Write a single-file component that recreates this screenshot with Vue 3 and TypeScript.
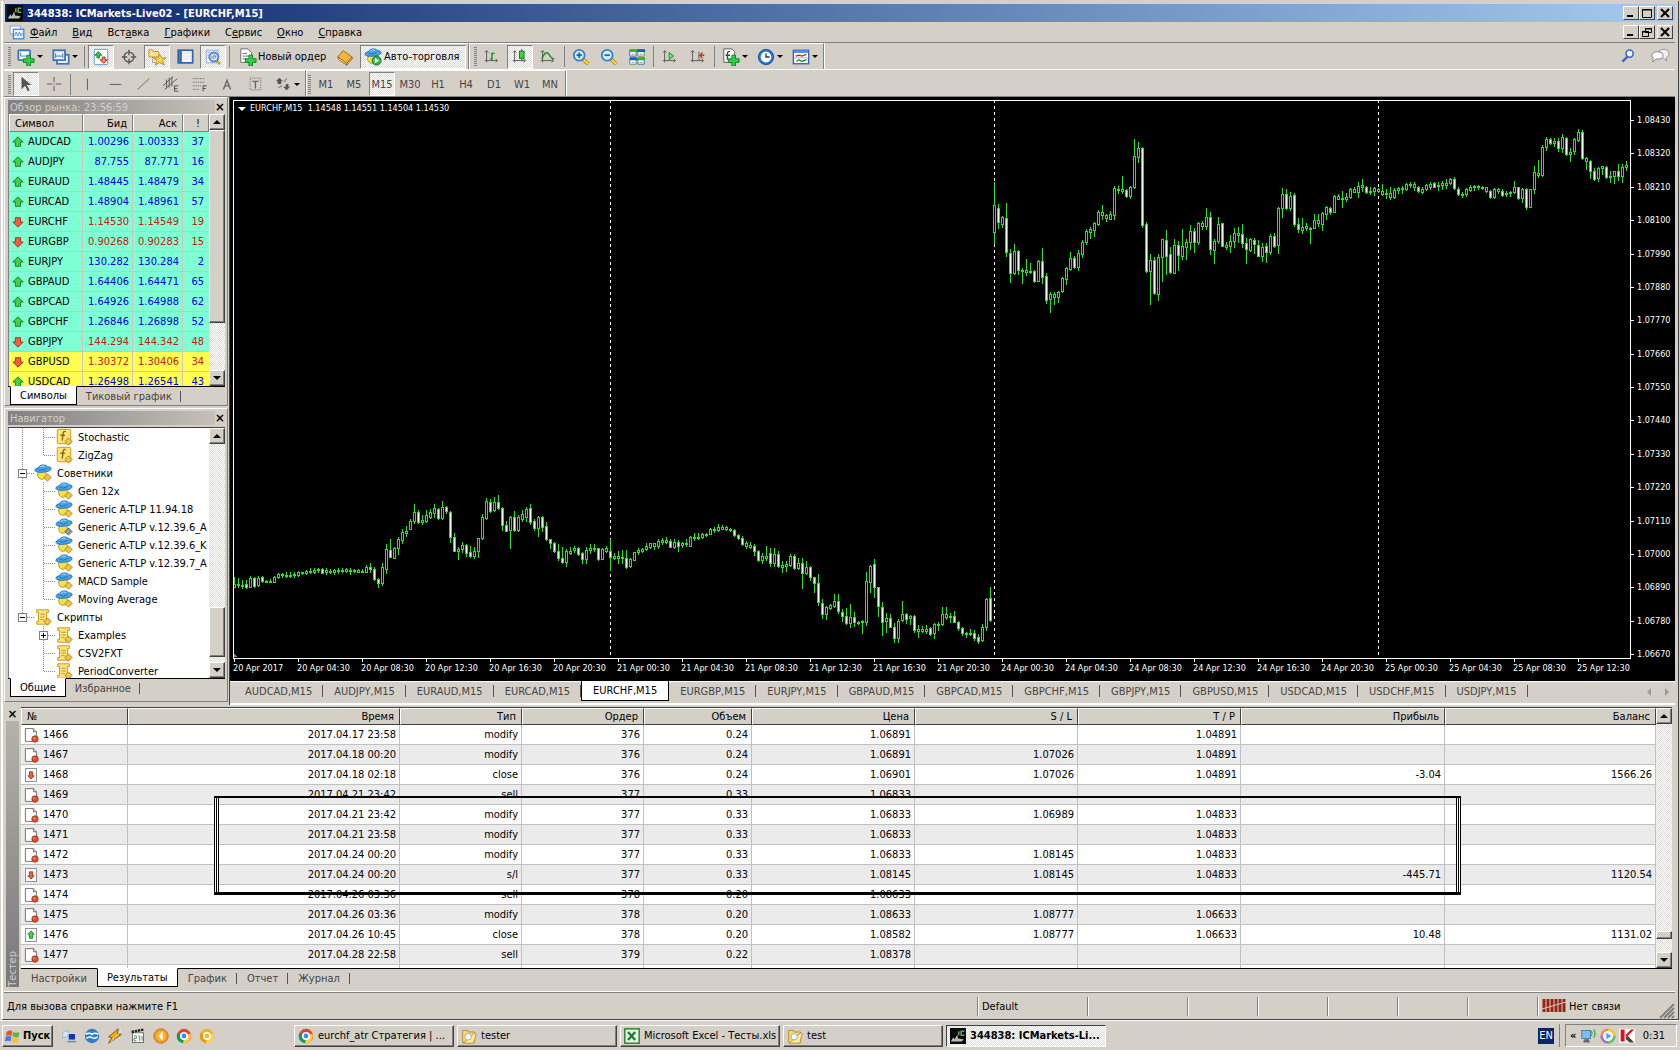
<script setup lang="ts">
interface Quote { symbol: string; bid: string; ask: string; spread: number; dir: 'up' | 'down'; hot?: boolean }
interface TreeNode { level: 1 | 2; icon: string; label: string; box?: '+' | '-'; trunk: 'full' | 'half' | 'none'; last?: boolean }
interface Candle { x: number; high: number; top: number; bottom: number; low: number; bear: boolean }
interface Tool { icon: string; label: string; on?: boolean; drop?: boolean; text?: string; sep?: boolean }

const menu = [
  ['', 'Ф', 'айл'], ['', 'В', 'ид'], ['Вст', 'а', 'вка'], ['', 'Г', 'рафики'],
  ['С', 'е', 'рвис'], ['', 'О', 'кно'], ['', 'С', 'правка'],
]

const sep: Tool = { icon: '', label: '', sep: true }
const standardTools: Tool[] = [
  { icon: 'newChart', label: 'Новый график', drop: true },
  { icon: 'profiles', label: 'Профили', drop: true },
  sep,
  { icon: 'market', label: 'Обзор рынка', on: true },
  { icon: 'target', label: 'Окно данных' },
  { icon: 'star', label: 'Навигатор', on: true },
  { icon: 'terminal', label: 'Терминал' },
  { icon: 'tester', label: 'Тестер стратегий', on: true },
  sep,
  { icon: 'order', label: 'Новый ордер', text: 'Новый ордер' },
  { icon: 'book', label: 'MetaEditor' },
  { icon: 'auto', label: 'Авто-торговля', text: 'Авто-торговля', on: true },
]
const chartTools: Tool[] = [
  { icon: 'bars', label: 'Бары' },
  { icon: 'candles', label: 'Японские свечи', on: true },
  { icon: 'line', label: 'Линия' },
  sep,
  { icon: 'zoomIn', label: 'Увеличить' },
  { icon: 'zoomOut', label: 'Уменьшить' },
  { icon: 'tile', label: 'Окна мозаикой' },
  sep,
  { icon: 'scroll', label: 'Автопрокрутка' },
  { icon: 'shift', label: 'Сдвиг графика' },
  sep,
  { icon: 'indicators', label: 'Индикаторы', drop: true },
  { icon: 'clock', label: 'Периоды', drop: true },
  { icon: 'template', label: 'Шаблоны', drop: true },
]
const drawTools: Tool[] = [
  { icon: 'pointer', label: 'Курсор', on: true },
  { icon: 'cross', label: 'Перекрестие' },
  sep,
  { icon: 'vline', label: 'Вертикальная линия' },
  { icon: 'hline', label: 'Горизонтальная линия' },
  { icon: 'trend', label: 'Трендовая линия' },
  { icon: 'channel', label: 'Канал' },
  { icon: 'fibo', label: 'Фибоначчи' },
  { icon: 'textA', label: 'Текст' },
  { icon: 'textT', label: 'Метка' },
  { icon: 'arrows', label: 'Стрелки', drop: true },
]
const periods = ['M1', 'M5', 'M15', 'M30', 'H1', 'H4', 'D1', 'W1', 'MN']

const quotes: Quote[] = [
  { symbol: 'AUDCAD', bid: '1.00296', ask: '1.00333', spread: 37, dir: 'up' },
  { symbol: 'AUDJPY', bid: '87.755', ask: '87.771', spread: 16, dir: 'up' },
  { symbol: 'EURAUD', bid: '1.48445', ask: '1.48479', spread: 34, dir: 'up' },
  { symbol: 'EURCAD', bid: '1.48904', ask: '1.48961', spread: 57, dir: 'up' },
  { symbol: 'EURCHF', bid: '1.14530', ask: '1.14549', spread: 19, dir: 'down' },
  { symbol: 'EURGBP', bid: '0.90268', ask: '0.90283', spread: 15, dir: 'down' },
  { symbol: 'EURJPY', bid: '130.282', ask: '130.284', spread: 2, dir: 'up' },
  { symbol: 'GBPAUD', bid: '1.64406', ask: '1.64471', spread: 65, dir: 'up' },
  { symbol: 'GBPCAD', bid: '1.64926', ask: '1.64988', spread: 62, dir: 'up' },
  { symbol: 'GBPCHF', bid: '1.26846', ask: '1.26898', spread: 52, dir: 'up' },
  { symbol: 'GBPJPY', bid: '144.294', ask: '144.342', spread: 48, dir: 'down' },
  { symbol: 'GBPUSD', bid: '1.30372', ask: '1.30406', spread: 34, dir: 'down', hot: true },
  { symbol: 'USDCAD', bid: '1.26498', ask: '1.26541', spread: 43, dir: 'up', hot: true },
]

const tree: TreeNode[] = [
  { level: 2, icon: 'func', label: 'Stochastic', trunk: 'full' },
  { level: 2, icon: 'func', label: 'ZigZag', trunk: 'full', last: true },
  { level: 1, icon: 'expert', label: 'Советники', box: '-', trunk: 'full' },
  { level: 2, icon: 'expert', label: 'Gen 12x', trunk: 'full' },
  { level: 2, icon: 'expert', label: 'Generic A-TLP 11.94.18', trunk: 'full' },
  { level: 2, icon: 'expertOff', label: 'Generic A-TLP v.12.39.6_A', trunk: 'full' },
  { level: 2, icon: 'expert', label: 'Generic A-TLP v.12.39.6_K', trunk: 'full' },
  { level: 2, icon: 'expert', label: 'Generic A-TLP v.12.39.7_A', trunk: 'full' },
  { level: 2, icon: 'expert', label: 'MACD Sample', trunk: 'full' },
  { level: 2, icon: 'expert', label: 'Moving Average', trunk: 'full', last: true },
  { level: 1, icon: 'script', label: 'Скрипты', box: '-', trunk: 'half' },
  { level: 2, icon: 'script', label: 'Examples', box: '+', trunk: 'none' },
  { level: 2, icon: 'script', label: 'CSV2FXT', trunk: 'none' },
  { level: 2, icon: 'script', label: 'PeriodConverter', trunk: 'none', last: true },
]

const prices = [
  '1.08430', '1.08320', '1.08210', '1.08100', '1.07990', '1.07880', '1.07770', '1.07660', '1.07550',
  '1.07440', '1.07330', '1.07220', '1.07110', '1.07000', '1.06890', '1.06780', '1.06670',
]
const times = [
  '20 Apr 2017', '20 Apr 04:30', '20 Apr 08:30', '20 Apr 12:30', '20 Apr 16:30', '20 Apr 20:30',
  '21 Apr 00:30', '21 Apr 04:30', '21 Apr 08:30', '21 Apr 12:30', '21 Apr 16:30', '21 Apr 20:30',
  '24 Apr 00:30', '24 Apr 04:30', '24 Apr 08:30', '24 Apr 12:30', '24 Apr 16:30', '24 Apr 20:30',
  '25 Apr 00:30', '25 Apr 04:30', '25 Apr 08:30', '25 Apr 12:30',
]
const daySeparators = [376, 760, 1144]

// One bar per item: high, body top, body bottom, low. A leading minus marks a falling bar.
const bars = `
477,484,487,487 -478,484,485,487 480,485,486,488 -480,484,487,488 476,478,487,487 -477,478,486,487
476,478,485,486 -476,477,481,482 480,481,482,482 479,481,482,482 476,477,482,482 473,474,477,478
473,474,475,477 -472,475,476,477 472,475,476,477 472,474,475,477 471,472,475,476 472,472,473,474
470,471,473,474 468,471,472,473 468,470,472,473 468,469,470,472 -468,469,473,473 468,470,472,474
469,471,472,473 469,470,472,474 468,470,471,473 468,470,471,472 468,469,471,472 468,470,471,474
469,470,471,472 469,470,472,472 469,471,472,472 465,467,472,472 -463,467,469,472 -467,469,479,480
-478,479,483,487 463,467,483,485 444,449,469,473 -439,450,457,457 447,448,458,458 437,439,448,454
429,432,440,443 426,431,433,436 419,421,429,429 404,412,421,423 -410,412,422,423 415,420,422,424
410,415,421,422 409,412,417,418 404,408,413,417 -408,409,418,419 401,407,418,419 -406,407,411,413
-411,412,437,442 -433,437,451,451 447,449,451,459 442,445,449,452 -444,445,453,456 -446,452,456,457
447,451,456,458 438,438,451,457 414,417,438,439 398,401,418,419 -399,402,411,412 397,402,410,411
-395,402,408,409 -407,408,425,430 -421,425,431,431 416,417,430,448 -411,417,430,431 415,417,430,431
410,414,419,421 407,409,417,421 -404,408,422,424 -419,421,428,430 416,417,428,436 -416,417,427,431
-422,426,439,440 -439,439,443,448 -442,443,451,452 -444,451,458,460 -447,458,462,463 449,451,462,466
447,451,453,454 446,448,450,452 -447,448,454,455 -452,453,459,463 447,450,459,463 444,448,450,453
444,448,449,451 -448,448,459,460 448,449,459,459 446,448,451,452 -439,451,457,470 453,456,458,459
451,456,458,463 450,457,458,463 -450,458,467,468 458,459,466,467 452,452,460,460 448,450,452,454
448,449,451,452 443,446,449,450 443,443,447,448 443,443,446,449 439,441,446,448 438,440,442,444
437,440,442,443 -439,441,447,447 439,442,447,448 -440,442,446,451 442,443,445,447 439,443,444,446
436,437,446,446 433,437,438,440 433,437,438,439 433,434,437,438 433,434,435,436 428,429,434,434
427,429,430,432 424,427,430,431 425,427,429,429 426,427,429,430 428,429,430,431 -429,430,435,436
-434,435,438,439 -436,438,444,445 441,443,446,448 442,445,447,448 -444,446,451,455 -450,451,460,461
453,456,460,463 446,456,458,460 -448,453,463,466 448,454,463,466 -451,454,466,467 461,465,467,472
461,464,466,471 454,456,465,466 -454,456,468,469 458,463,468,469 -458,463,473,488 461,467,473,474
-466,467,477,480 -477,477,483,492 -474,483,502,505 -499,503,514,518 506,507,514,519 504,505,508,509
494,501,506,507 -494,501,511,513 -509,512,516,521 -508,516,523,524 504,517,523,527 -512,517,522,526
521,522,523,524 520,521,522,533 472,481,522,525 465,466,482,492 -459,464,487,497 -487,487,506,516
-502,507,522,535 513,518,521,532 -514,518,527,527 -523,527,538,542 519,521,538,542 501,514,520,521
-513,514,519,523 515,516,518,524 -515,516,530,532 525,529,531,537 526,529,531,532 525,529,531,533
-527,528,534,535 523,524,533,538 522,524,525,530 507,514,524,525 507,514,517,519 513,516,517,522
-511,516,522,522 -521,522,528,530 -527,528,533,535 532,533,534,537 529,533,534,535 -530,533,538,540
-534,537,541,543 524,527,540,541 498,499,527,530 -487,498,520,521 82,105,132,143 -104,108,122,128
116,117,124,127 -103,118,152,156 -149,153,173,182 144,151,173,174 -150,151,170,174 168,170,171,183
159,170,172,175 163,171,172,173 -170,171,181,182 160,161,181,181 -148,161,177,183 -173,176,200,203
192,194,199,212 192,194,197,204 191,192,197,202 177,178,191,192 167,168,179,184 152,158,169,170
-156,158,167,168 150,153,167,170 140,142,154,157 129,131,142,144 127,129,132,138 122,123,130,136
110,112,124,125 105,112,115,119 114,115,118,121 111,114,119,119 86,88,115,119 86,89,90,93
76,89,91,93 -89,90,96,97 86,87,96,98 39,56,87,88 42,48,57,62 -47,48,125,127
-122,124,171,172 154,160,171,204 -157,160,193,194 154,157,194,200 139,139,157,181 -130,140,156,174
-147,154,172,173 139,145,173,173 -141,145,155,170 129,146,156,159 139,142,147,159 125,131,142,149
-128,131,142,152 122,123,142,144 121,123,126,129 108,117,126,129 -112,117,149,154 139,141,150,163
117,124,141,143 -123,123,146,146 142,145,147,149 135,141,146,152 128,133,141,147 127,133,135,142
-124,134,143,147 -138,143,149,163 138,139,150,151 -138,140,144,153 -140,145,156,156 143,147,156,161
-143,146,152,162 134,136,152,154 -133,136,146,147 107,108,145,153 88,94,108,117 -89,94,108,109
92,96,108,110 -93,95,124,126 -118,124,129,132 118,127,130,133 123,126,128,130 127,128,129,143
114,120,128,128 114,120,123,126 112,113,124,130 106,107,114,119 -107,108,112,114 95,96,112,112
94,96,99,99 91,98,99,107 93,97,99,101 88,89,97,98 87,89,92,92 82,86,92,97
79,85,87,91 -86,87,92,93 87,91,92,94 87,88,91,95 88,89,91,92 84,91,94,95
89,93,94,98 87,93,97,99 88,90,97,98 87,88,90,93 86,88,89,93 83,84,89,90
82,84,85,87 82,84,87,90 -86,87,91,92 87,89,92,93 84,85,89,90 82,84,87,89
-82,83,87,87 82,85,86,90 81,83,85,89 79,83,85,88 78,79,83,84 -77,79,88,89
-87,89,94,95 92,94,95,97 88,89,94,96 85,87,90,91 85,86,87,90 85,86,87,89
86,87,88,89 87,87,91,92 -90,91,97,98 88,89,97,98 88,89,91,93 -89,91,95,96
91,93,94,96 91,92,93,96 81,87,92,93 -87,87,98,99 88,89,98,102 -88,89,107,109
89,89,107,107 66,72,89,93 60,73,75,77 45,47,75,76 37,39,47,50 -38,39,43,44
38,41,43,46 -38,41,48,51 34,37,48,52 -37,38,54,55 48,52,54,61 38,39,51,54
29,32,40,41 -30,32,58,59 57,58,61,69 -60,61,71,78 -68,71,79,80 67,68,78,81
66,66,68,74 -66,67,77,78 71,76,77,82 71,71,76,83 -64,71,76,80 64,67,76,82
61,65,67,70`
const candles: Candle[] = bars.trim().split(/\s+/).map((bar, i) => {
  const [high, top, bottom, low] = bar.replace('-', '').split(',').map(Number)
  return { x: i * 4, high, top, bottom, low, bear: bar.startsWith('-') }
})

const chartTabs = [
  'AUDCAD', 'AUDJPY', 'EURAUD', 'EURCAD', 'EURCHF', 'EURGBP', 'EURJPY', 'GBPAUD',
  'GBPCAD', 'GBPCHF', 'GBPJPY', 'GBPUSD', 'USDCAD', 'USDCHF', 'USDJPY',
]

const columns = [
  { title: '№', width: 107 }, { title: 'Время', width: 272 }, { title: 'Тип', width: 122 },
  { title: 'Ордер', width: 122 }, { title: 'Объем', width: 108 }, { title: 'Цена', width: 163 },
  { title: 'S / L', width: 163 }, { title: 'T / P', width: 163 }, { title: 'Прибыль', width: 204 },
  { title: 'Баланс', width: 0 },
]
const results: string[][] = [
  ['1466', '2017.04.17 23:58', 'modify', '376', '0.24', '1.06891', '', '1.04891', '', ''],
  ['1467', '2017.04.18 00:20', 'modify', '376', '0.24', '1.06891', '1.07026', '1.04891', '', ''],
  ['1468', '2017.04.18 02:18', 'close', '376', '0.24', '1.06901', '1.07026', '1.04891', '-3.04', '1566.26'],
  ['1469', '2017.04.21 23:42', 'sell', '377', '0.33', '1.06833', '', '', '', ''],
  ['1470', '2017.04.21 23:42', 'modify', '377', '0.33', '1.06833', '1.06989', '1.04833', '', ''],
  ['1471', '2017.04.21 23:58', 'modify', '377', '0.33', '1.06833', '', '1.04833', '', ''],
  ['1472', '2017.04.24 00:20', 'modify', '377', '0.33', '1.06833', '1.08145', '1.04833', '', ''],
  ['1473', '2017.04.24 00:20', 's/l', '377', '0.33', '1.08145', '1.08145', '1.04833', '-445.71', '1120.54'],
  ['1474', '2017.04.26 03:36', 'sell', '378', '0.20', '1.08633', '', '', '', ''],
  ['1475', '2017.04.26 03:36', 'modify', '378', '0.20', '1.08633', '1.08777', '1.06633', '', ''],
  ['1476', '2017.04.26 10:45', 'close', '378', '0.20', '1.08582', '1.08777', '1.06633', '10.48', '1131.02'],
  ['1477', '2017.04.28 22:58', 'sell', '379', '0.22', '1.08378', '', '', '', ''],
  ['', '', '', '', '', '', '', '', '', ''],
]
const rowIcon = (row: string[]): string => (row[9] === '' ? 'pageDot' : row[8].startsWith('-') ? 'pageDown' : 'pageUp')
const testerTabs = ['Настройки', 'Результаты', 'График', 'Отчет', 'Журнал']

const quickLaunch = ['desktop', 'bird', 'winamp', 'mpc', 'aimp', 'chrome', 'canary']
const tasks = [
  { icon: 'chrome', title: 'eurchf_atr Стратегия | ...' },
  { icon: 'folder', title: 'tester' },
  { icon: 'excel', title: 'Microsoft Excel - Тесты.xls' },
  { icon: 'folder', title: 'test' },
  { icon: 'mt', title: '344838: ICMarkets-Li...', on: true },
]

const axes = '<path d="M4 3v13M2 14h14M2 5l2-2 2 2M14 12l2 2-2 2" fill="none" stroke="#555"/>'
const plus = '<path d="M11 8h4v4h4v4h-4v4h-4v-4H7v-4h4z" fill="#2fd043" stroke="#0a7d1c"/>'
const gem = (fill: string, line: string) => `<path d="M15 11l4 4-4 4-4-4z" fill="${fill}" stroke="${line}"/>`
const hat = '<ellipse cx="9" cy="12" rx="5" ry="5" fill="#f4e04a" stroke="#a99416"/><path d="M1 7q0-2 4-3 1-3 5-3t5 2q4 0 4 2 0 3-8 4-9 1-10-2z" fill="#48a5e8" stroke="#1a6bae"/><path d="M5 6q4 2 9-1" fill="none" stroke="#1a6bae"/><path d="M7 3q3-2 5 0" fill="none" stroke="#b6e0ff"/>'
const page = '<path d="M3 2h10l4 4v12H3z" fill="#fff" stroke="#555"/><path d="M13 2v4h4" fill="#ddd" stroke="#555"/>'
const lens = '<path d="M12 12l6 6" stroke="#b98500" stroke-width="4"/><path d="M12 12l6 6" stroke="#ffdc5a" stroke-width="2"/><circle cx="8" cy="8" r="6" fill="#d6efff" stroke="#3c83c4" stroke-width="2"/>'
const wheel = (a: string, b: string, c: string, d: string) =>
  `<circle cx="10" cy="10" r="9" fill="${a}"/><path d="M10 10L2 6a9 9 0 0 0 7 13z" fill="${b}"/><path d="M10 10l8-3a9 9 0 0 1-9 12z" fill="${c}"/><circle cx="10" cy="10" r="4" fill="${d}" stroke="#fff" stroke-width="2"/>`
const arrowUp = '<path d="M10 4l6 6h-3v5H7v-5H4z" fill="#46cf46" stroke="#12721c"/>'
const arrowDown = '<path d="M10 16l6-6h-3V5H7v5H4z" fill="#f2603a" stroke="#a32411"/>'

const icons: Record<string, string> = {
  newChart: `<rect x="1.5" y="2.5" width="13" height="11" rx="1" fill="#fff" stroke="#3a74bd" stroke-width="2"/><path d="M4 9V5M4 9h8" stroke="#3a74bd"/>${plus}`,
  profiles: '<rect x="5.5" y="7.5" width="13" height="10" fill="#fff" stroke="#3a74bd" stroke-width="2"/><rect x="1.5" y="2.5" width="13" height="11" fill="#e9f3ff" stroke="#3a74bd" stroke-width="2"/><path d="M4 6v5M4 9h8M12 6v5" stroke="#3a74bd"/>',
  market: '<rect x="2.5" y="1.5" width="15" height="17" rx="1" fill="#fff" stroke="#4f8fd0"/><path d="M7 4l4 4H8.5v3h-3V8H3z" fill="#3fc43f" stroke="#16801c"/><path d="M13 17l4-4h-2.500v-3h-3v3H9z" fill="#f58a6a" stroke="#b02a12"/>',
  target: '<circle cx="10" cy="10" r="5.5" fill="none" stroke="#555" stroke-width="1.5"/><path d="M10 2v6M10 12v6M2 10h6M12 10h6" stroke="#555" stroke-width="1.5"/>',
  star: '<path d="M1 2h4l1 2h6v6H1z" fill="#ffe28a" stroke="#b8902a"/><path d="M5 10v6M5 16h4" stroke="#555" stroke-dasharray="1 1"/><path d="M13 7l2 4 5 0-4 3 2 5-5-3-5 3 2-5-4-3h5z" fill="#ffd84a" stroke="#b5861a"/>',
  terminal: '<rect x="2.5" y="2.5" width="16" height="14" fill="#fff" stroke="#2d67ad" stroke-width="2"/><path d="M5 3v13" stroke="#2d67ad" stroke-width="3"/><path d="M8 6h9M8 9h9M8 12h9" stroke="#cfd8e4"/>',
  tester: '<rect x="2.5" y="2.5" width="13" height="14" fill="#eef5ff" stroke="#89a9cf"/><path d="M4 5h3M4 8h3M4 11h3" stroke="#89a9cf"/><path d="M14 14l4 4" stroke="#d9a520" stroke-width="3"/><circle cx="11" cy="10" r="5" fill="#d8ecff" stroke="#4c87c6" stroke-width="2"/><path d="M9 12v-3M11 12V7M13 11V8" stroke="#7a5fc0"/>',
  order: `<path d="M2 1h8l4 4v11H2z" fill="#fff" stroke="#666"/><path d="M4 6h5M4 9h7M4 12h4" stroke="#666"/>${plus}`,
  book: '<path d="M2 10l6-7 10 7-6 7z" fill="#f3b63a" stroke="#96650d"/><path d="M2 10l10 7v2L3 13zM12 17l6-7v2l-6 7z" fill="#fbe7ae" stroke="#96650d"/>',
  auto: `${hat}<circle cx="14" cy="14" r="5" fill="#2eb83a" stroke="#0c7a1b"/><path d="M12 11l5 3-5 3z" fill="#fff"/>`,
  bars: `${axes}<path d="M10 5v9M10 12H8M10 6h3" stroke="#178a22" stroke-width="1.5"/>`,
  candles: `${axes}<path d="M12 1v14" stroke="#0b6e18"/><rect x="9.5" y="3.5" width="5" height="8" fill="#37d64a" stroke="#0b6e18"/>`,
  line: `${axes}<path d="M3 12q5-10 8-5t6 5" fill="none" stroke="#178a22" stroke-width="1.5"/>`,
  zoomIn: `${lens}<path d="M5 8h6M8 5v6" stroke="#1f62ad" stroke-width="2"/>`,
  zoomOut: `${lens}<path d="M5 8h6" stroke="#1f62ad" stroke-width="2"/>`,
  tile: '<path d="M2 2h7v7H2zM11 11h7v7h-7z" fill="#fff" stroke="#2d67c0"/><path d="M11 2h7v7h-7zM2 11h7v7H2z" fill="#fff" stroke="#3c9f2b"/><path d="M2 3h8M10 12h9" stroke="#3fae24" stroke-width="3"/><path d="M10 3h9M2 12h8" stroke="#2457c5" stroke-width="3"/><path d="M4 7h3M13 7h3M4 16h3M13 16h3" stroke="#7c98b8"/>',
  scroll: `${axes}<path d="M9 5l5 4-5 4z" fill="#6de07a" stroke="#178a22"/>`,
  shift: `${axes}<path d="M11 4v10" stroke="#555"/><path d="M17 8h-5M15 5l-3 3 3 3" fill="none" stroke="#c0391f" stroke-width="1.5"/>`,
  indicators: `<path d="M2 1h9l3 3v12H2z" fill="#fff" stroke="#555"/><path d="M9 4Q6 3 6 7v6M4 8h5" fill="none" stroke="#444" stroke-width="1.5"/>${plus}`,
  clock: '<circle cx="10" cy="10" r="8.5" fill="#2377cf" stroke="#0e4f9c"/><circle cx="10" cy="10" r="6" fill="#f2f9ff"/><path d="M10 6v4h4" fill="none" stroke="#334" stroke-width="1.5"/>',
  template: '<rect x="1.5" y="2.5" width="17" height="15" fill="#fff" stroke="#2d67ad" stroke-width="1.5"/><path d="M2 4h16" stroke="#4f90da" stroke-width="3"/><path d="M4 9l4-1 3 1 5-2" fill="none" stroke="#b32a17" stroke-width="1.5"/><path d="M2 11h16" stroke="#9ab"/><path d="M5 15l3-2 3 2 5-2" fill="none" stroke="#1b8a2a" stroke-width="1.5"/>',
  pointer: '<path d="M5 2v14l4-4 3 6 2-1-3-6h5z" fill="#555"/>',
  cross: '<path d="M10 2v6M10 12v6M2 10h6M12 10h6M9.5 10h1" stroke="#555"/>',
  vline: '<path d="M10.5 4v13" stroke="#555"/>',
  hline: '<path d="M4 10.5h13" stroke="#555"/>',
  trend: '<path d="M4 16L17 4" stroke="#666"/>',
  channel: '<path d="M1 12L12 2M3 16L17 4M5 5v10M8 3v11M11 2v11" stroke="#555"/><path d="M14 12h4M14 12v6h4M14 15h3" fill="none" stroke="#444"/>',
  fibo: '<path d="M3 4h14M3 8h14M3 12h10" stroke="#555" stroke-dasharray="1 1"/><path d="M3 16h8" stroke="#555" stroke-dasharray="1 1"/><path d="M14.5 18v-6h4M14.5 15h3" fill="none" stroke="#444"/>',
  textA: '<path d="M6 16l4-10 4 10M7 12h6" fill="none" stroke="#666" stroke-width="1.5"/>',
  textT: '<rect x="4.5" y="3.5" width="12" height="13" fill="none" stroke="#666" stroke-dasharray="1 1"/><path d="M7 7h7M10.5 7v8" stroke="#666" stroke-width="1.5"/>',
  arrows: '<path d="M6 3l4 4h-2v3H4V7H2zM14 17l4-4h-2v-3h-3v3h-3z" fill="#555"/><path d="M14 4l-3 4M5 14l4-2" stroke="#555" fill="none"/>',
  search: '<path d="M9 11l-6 6" stroke="#3a67c0" stroke-width="3"/><circle cx="12" cy="7" r="4.5" fill="#f4f8ff" stroke="#3a67c0" stroke-width="2"/>',
  chat: '<path d="M9 5q6-4 10 1 1 4-3 6l1 3-4-3-5-2z" fill="#eee" stroke="#999"/><path d="M2 8q4-4 10-1 3 4-2 6H6l-3 3v-4q-2-2-1-4z" fill="#fff" stroke="#888"/>',
  up: arrowUp,
  down: arrowDown,
  expert: hat + gem('#f2c544', '#a97a12'),
  expertOff: hat + gem('#999', '#555'),
  script: `<path d="M3 2h13v3h-2v9h2v4H3v-3h2V5H3z" fill="#ffe377" stroke="#bb9420"/><path d="M7 7h5M7 10h5M7 13h4" stroke="#bb9420"/>${gem('#f2c544', '#a97a12')}`,
  func: `<rect x="2.5" y="1.5" width="15" height="16" rx="1" fill="#ffe377" stroke="#bb9420"/><path d="M12 4q-3-1-3 3l-1 7M6 8h5" fill="none" stroke="#8a6508" stroke-width="1.5"/>${gem('#f2c544', '#a97a12')}`,
  pageDot: `${page}<circle cx="15" cy="15" r="4" fill="#e4512b" stroke="#9c2a10"/><circle cx="14" cy="14" r="1" fill="#ffb59c"/>`,
  pageDown: `<rect x="3" y="2" width="14" height="16" fill="#fff" stroke="#777"/><path d="M10 15l4-4h-2V6H8v5H6z" fill="#f2603a" stroke="#a32411"/>`,
  pageUp: `<rect x="3" y="2" width="14" height="16" fill="#fff" stroke="#777"/><path d="M10 5l4 4h-2v5H8V9H6z" fill="#46cf46" stroke="#12721c"/>`,
  mt: '<rect width="20" height="20" fill="#0a0a0a"/><path d="M1 17l3-5 2 2 3-6 1 5 7 1-2 3z" fill="#b9bdb5"/><path d="M11 4v5M18 4h-4v5h4" fill="none" stroke="#5f9f69" stroke-width="2"/>',
  mdi: '<rect x="1.5" y="2.5" width="13" height="10" fill="#fff" stroke="#6f9ad0"/><rect x="5.5" y="6.5" width="13" height="12" fill="#e6f2ff" stroke="#3a80cf" stroke-width="1.5"/><path d="M7 15l2-5 2 5 2-5 2 5 2-4" fill="none" stroke="#3a80cf"/>',
  flag: '<path d="M2 5q4-3 7-1L8 10q-3-2-7 0z" fill="#e8502a"/><path d="M10 5q4 2 8 0l-1 6q-4 2-8-1z" fill="#5cb83c"/><path d="M1 11q4-2 7 0l-1 6q-3-2-7 0z" fill="#3f7be0"/><path d="M9 12q4 2 8 0l-1 6q-4 2-8-1z" fill="#f5c22f"/>',
  desktop: '<path d="M2 6q3-4 8-2l-2 7-6 1z" fill="#d6e4f4" stroke="#8fa9c8"/><rect x="9" y="7" width="9" height="8" fill="#1136b5" stroke="#dfe7f2"/><path d="M8 17h11" stroke="#789" stroke-width="2"/>',
  bird: '<circle cx="10" cy="10" r="9" fill="#2f7fc9"/><path d="M2 8q4-3 8 0 4-3 8 0M3 13q4-3 7-1 4 2 7-1" fill="none" stroke="#fff" stroke-width="2"/>',
  winamp: '<path d="M14 1L2 11l4 1-4 7L18 8l-5-1z" fill="#f5a623" stroke="#6b4a10"/><path d="M18 3L5 17" stroke="#eee"/>',
  mpc: '<rect x="3" y="6" width="14" height="12" fill="#fff" stroke="#555"/><path d="M2 5l15-3" stroke="#222" stroke-width="3" stroke-dasharray="3 1"/><path d="M5 10h3v3H5v3h3M10 10h2v6M15 10v6" fill="none" stroke="#2b6d3e"/>',
  aimp: '<circle cx="10" cy="10" r="9" fill="#f79a1e" stroke="#c06a08"/><circle cx="10" cy="10" r="6" fill="#ffb33a"/><path d="M12 4l-5 6 5 6z" fill="#fff"/>',
  chrome: wheel('#db4437', '#0f9d58', '#ffcd40', '#4285f4'),
  canary: wheel('#f5b324', '#e89d10', '#ffd45e', '#f7b92f'),
  folder: '<path d="M2 3h6l1 2h8v13H2z" fill="#f7d66b" stroke="#a9852a"/><path d="M17 6l2 1-3 12H3z" fill="#ffe999" stroke="#a9852a"/><circle cx="9" cy="11" r="4" fill="#f2f8ff" stroke="#8aa4c2"/>',
  excel: '<rect x="1" y="1" width="18" height="18" fill="#e9f4e6" stroke="#3a8a42" stroke-width="2"/><path d="M5 5l9 10M14 5L5 15" stroke="#237a34" stroke-width="3"/>',
  net: '<rect x="1" y="3" width="11" height="10" fill="#78c0ee" stroke="#3a6c9c"/><path d="M4 15h6M3 17h8" stroke="#667" stroke-width="2"/><path d="M13 4q2 3 0 6M16 2q3 5 0 10" fill="none" stroke="#2daa2d" stroke-width="1.5"/>',
  play: '<circle cx="10" cy="10" r="8" fill="#eaf6ff" stroke="#f08a4b" stroke-width="3"/><path d="M10 2a8 8 0 0 1 8 8" stroke="#f2c53c" stroke-width="3" fill="none"/><path d="M18 10a8 8 0 0 1-8 8" stroke="#5cc46a" stroke-width="3" fill="none"/><path d="M10 18a8 8 0 0 1-8-8" stroke="#9a6fd0" stroke-width="3" fill="none"/><path d="M8 6l6 4-6 4z" fill="#4aa3e6"/>',
  kasp: '<rect x="0" y="1" width="20" height="18" fill="#fff"/><path d="M2 2h5v15H2zM8 9l7-7h4L10 11z" fill="#d9141e"/><path d="M8 11l3-1 8 8h-6l-4-4z" fill="#444"/>',
}
</script>

<template>
  <div class="desktop">
    <div class="window">
      <header class="title">
        <svg class="i16" viewBox="0 0 20 20" v-html="icons.mt" />
        <h1>344838: ICMarkets-Live02 - [EURCHF,M15]</h1>
        <div class="winbtns">
          <button aria-label="Свернуть"><svg viewBox="0 0 12 10"><path d="M2 8h6" stroke="#000" stroke-width="2" /></svg></button>
          <button aria-label="Развернуть"><svg viewBox="0 0 12 10"><path d="M1.5 1.5h9v8h-9zM1 2h10" fill="none" stroke="#000" /></svg></button>
          <button class="close" aria-label="Закрыть"><svg viewBox="0 0 12 10"><path d="M2 1l8 8M10 1L2 9" stroke="#000" stroke-width="2" /></svg></button>
        </div>
      </header>

      <nav class="menu">
        <svg class="i16" viewBox="0 0 20 20" v-html="icons.mdi" />
        <button v-for="m in menu" :key="m[2]">{{ m[0] }}<u>{{ m[1] }}</u>{{ m[2] }}</button>
        <div class="winbtns">
          <button aria-label="Свернуть окно"><svg viewBox="0 0 12 10"><path d="M2 8h6" stroke="#000" stroke-width="2" /></svg></button>
          <button aria-label="Восстановить окно"><svg viewBox="0 0 12 10"><path d="M4.5 1.5h6v4h-6zM4 2h7M1.5 4.5h6v5h-6zM1 5h7" fill="#d4d0c8" stroke="#000" /></svg></button>
          <button class="close" aria-label="Закрыть окно"><svg viewBox="0 0 12 10"><path d="M2 1l8 8M10 1L2 9" stroke="#000" stroke-width="2" /></svg></button>
        </div>
      </nav>

      <div class="toolbar">
        <div class="band">
          <i class="grip" />
          <template v-for="(t, k) in standardTools" :key="k">
            <i v-if="t.sep" class="tsep" />
            <button v-else class="tool" :class="{ on: t.on, drop: t.drop, wide: t.text }" :aria-label="t.label">
              <svg class="i18" viewBox="0 0 20 20" v-html="icons[t.icon]" />
              <span v-if="t.text">{{ t.text }}</span>
            </button>
          </template>
        </div>
        <div class="band">
          <i class="grip" />
          <template v-for="(t, k) in chartTools" :key="k">
            <i v-if="t.sep" class="tsep" />
            <button v-else class="tool" :class="{ on: t.on, drop: t.drop }" :aria-label="t.label">
              <svg class="i18" viewBox="0 0 20 20" v-html="icons[t.icon]" />
            </button>
          </template>
        </div>
        <div class="right">
          <button class="flat" aria-label="Поиск"><svg class="i16" viewBox="0 0 20 20" v-html="icons.search" /></button>
          <button class="flat" aria-label="Чат"><svg class="i20" viewBox="0 0 20 20" v-html="icons.chat" /></button>
        </div>
      </div>
      <div class="toolbar lower">
        <div class="band">
          <i class="grip" />
          <template v-for="(t, k) in drawTools" :key="k">
            <i v-if="t.sep" class="tsep" />
            <button v-else class="tool" :class="{ on: t.on, drop: t.drop }" :aria-label="t.label">
              <svg class="i18" viewBox="0 0 20 20" v-html="icons[t.icon]" />
            </button>
          </template>
        </div>
        <div class="band">
          <i class="grip" />
          <button v-for="p in periods" :key="p" class="tool period" :class="{ on: p === 'M15' }">{{ p }}</button>
        </div>
      </div>

      <div class="work">
        <aside class="side">
          <section class="panel market">
            <div class="ptitle"><h2>Обзор рынка: 23:56:59</h2><button class="x" aria-label="Закрыть обзор рынка">×</button></div>
            <div class="pbody">
              <div class="clip">
                <table class="quotes">
                  <colgroup><col class="c1"><col class="c2"><col class="c2"><col></colgroup>
                  <thead><tr><th>Символ</th><th>Бид</th><th>Аск</th><th>!</th></tr></thead>
                  <tbody>
                    <tr v-for="q in quotes" :key="q.symbol" :class="[q.dir, { hot: q.hot }]">
                      <td><span class="sym"><svg class="i12" viewBox="3 3 14 14" v-html="icons[q.dir]" />{{ q.symbol }}</span></td>
                      <td>{{ q.bid }}</td><td>{{ q.ask }}</td><td>{{ q.spread }}</td>
                    </tr>
                  </tbody>
                </table>
              </div>
              <div class="vscroll">
                <button class="arr up" aria-label="Вверх" /><i class="thumb quotes-thumb" /><i class="fill" /><button class="arr dn" aria-label="Вниз" />
              </div>
            </div>
            <div class="tabs"><button class="tab on">Символы</button><button class="tab">Тиковый график</button></div>
          </section>

          <section class="panel navi">
            <div class="ptitle"><h2>Навигатор</h2><button class="x" aria-label="Закрыть навигатор">×</button></div>
            <div class="pbody white">
              <ul class="clip tree">
                <li v-for="n in tree" :key="n.label" :class="'l' + n.level">
                  <svg class="twig" :width="n.level === 1 ? 25 : 46" height="18">
                    <g fill="none" stroke="#888" stroke-dasharray="1 1">
                      <path v-if="n.trunk !== 'none'" :d="n.trunk === 'full' ? 'M13.5 0v18' : 'M13.5 0v9'" />
                      <path v-if="n.level === 1" d="M18 9.5h7" />
                      <path v-else :d="(n.last ? 'M34.5 0v9' : 'M34.5 0v18') + 'M35 9.5h11'" />
                    </g>
                    <g v-if="n.box" :transform="n.level === 1 ? 'translate(9 5)' : 'translate(30 5)'">
                      <rect x="0.5" y="0.5" width="8" height="8" fill="#fff" stroke="#808080" />
                      <path :d="n.box === '+' ? 'M2 4.5h5M4.5 2v5' : 'M2 4.5h5'" stroke="#000" />
                    </g>
                  </svg>
                  <svg class="i18" viewBox="0 0 20 20" v-html="icons[n.icon]" />
                  <span>{{ n.label }}</span>
                </li>
              </ul>
              <div class="vscroll">
                <button class="arr up" aria-label="Вверх" /><i class="fill" /><i class="thumb tree-thumb" /><i class="gap" /><button class="arr dn" aria-label="Вниз" />
              </div>
            </div>
            <div class="tabs"><button class="tab on">Общие</button><button class="tab">Избранное</button></div>
          </section>
        </aside>

        <main class="chart">
          <div class="canvas">
            <div class="plotrow">
              <div class="plot">
                <svg class="draw" shape-rendering="crispEdges">
                  <g v-for="s in daySeparators" :key="s"><path :d="`M${s + 0.5} 0v560`" stroke="#fff" stroke-dasharray="3 3" /></g>
                  <g v-for="c in candles" :key="c.x">
                    <rect :x="c.x" :y="c.high" width="1" :height="c.low - c.high + 1" fill="#32dc32" />
                    <rect :x="c.x - 1" :y="c.top" width="3" :height="Math.max(1, c.bottom - c.top + 1)" fill="#32dc32" />
                    <rect v-if="c.bottom - c.top > 1" :x="c.x" :y="c.top + 1" width="1" :height="c.bottom - c.top - 1" :fill="c.bear ? '#e6ffe6' : '#000'" />
                  </g>
                  <path d="M0 559l0-5 5 5z" fill="#8090a0" />
                </svg>
                <p class="quote"><i />EURCHF,M15&nbsp; 1.14548 1.14551 1.14504 1.14530</p>
              </div>
              <ol class="prices"><li v-for="p in prices" :key="p">{{ p }}</li></ol>
            </div>
            <ol class="times"><li v-for="t in times" :key="t">{{ t }}</li></ol>
          </div>
          <div class="ctabs">
            <button v-for="s in chartTabs" :key="s" class="ctab" :class="{ on: s === 'EURCHF' }">{{ s }},M15</button>
            <span class="spin"><button aria-label="Назад" class="l" /><button aria-label="Вперед" class="r" /></span>
          </div>
        </main>
      </div>

      <section class="tester">
        <div class="tside"><button class="x" aria-label="Закрыть тестер">×</button><h2>Тестер</h2></div>
        <div class="tmain">
          <div class="tbody">
            <div class="clip">
              <table class="results">
                <colgroup><col v-for="c in columns" :key="c.title" :style="c.width ? { width: c.width + 'px' } : {}"></colgroup>
                <thead><tr><th v-for="c in columns" :key="c.title">{{ c.title }}</th></tr></thead>
                <tbody>
                  <tr v-for="r in results" :key="r[0]">
                    <td v-for="(v, k) in r" :key="k">
                      <span v-if="k === 0" class="sym"><svg class="i16" viewBox="0 0 20 20" v-html="icons[rowIcon(r)]" />{{ v }}</span>
                      <template v-else>{{ v }}</template>
                    </td>
                  </tr>
                </tbody>
              </table>
              <div class="mark" />
            </div>
            <div class="vscroll">
              <button class="arr up" aria-label="Вверх" /><i class="fill" /><i class="thumb small" /><i class="gap" /><button class="arr dn" aria-label="Вниз" />
            </div>
          </div>
          <div class="tabs"><button v-for="t in testerTabs" :key="t" class="tab" :class="{ on: t === 'Результаты' }">{{ t }}</button></div>
        </div>
      </section>

      <footer class="status">
        <span class="hint">Для вызова справки нажмите F1</span>
        <span class="cell prof">Default</span>
        <span class="cell bar" />
        <span v-for="k in 5" :key="k" class="cell s" />
        <span class="cell conn">
          <svg width="24" height="14"><path d="M2 0v13M6 0v13M10 0v13M14 0v13M18 0v13M22 0v13" stroke="#9a2113" stroke-width="3" /><path d="M0 10L24 3" stroke="#d4d0c8" /></svg>
          Нет связи
        </span>
        <svg class="size" width="16" height="16"><path d="M1 15L15 1M5 15L15 5M9 15l6-6M13 15l2-2" stroke="#808080" stroke-width="2" /></svg>
      </footer>
    </div>

    <footer class="taskbar">
      <button class="start"><svg class="i16" viewBox="0 0 20 20" v-html="icons.flag" />Пуск</button>
      <div class="quick">
        <button v-for="q in quickLaunch" :key="q" class="flat" :aria-label="q"><svg class="i16" viewBox="0 0 20 20" v-html="icons[q]" /></button>
      </div>
      <div class="tasks">
        <button v-for="t in tasks" :key="t.title" class="task" :class="{ on: t.on }">
          <svg class="i16" viewBox="0 0 20 20" v-html="icons[t.icon]" /><span>{{ t.title }}</span>
        </button>
      </div>
      <span class="lang">EN</span>
      <div class="tray">
        <span class="more">«</span>
        <svg class="i16" viewBox="0 0 20 20" v-html="icons.net" />
        <svg class="i16" viewBox="0 0 20 20" v-html="icons.play" />
        <svg class="i16" viewBox="0 0 20 20" v-html="icons.kasp" />
        <time>0:31</time>
      </div>
    </footer>
  </div>
</template>

<style>
body { background: #d4d0c8; }
</style>

<style scoped>
.desktop { display: flex; flex-direction: column; height: 100vh; box-sizing: border-box; background: #d4d0c8; color: #000; font: 11px/13px Tahoma, "DejaVu Sans Condensed", "DejaVu Sans", sans-serif; overflow: hidden; }
.desktop * { box-sizing: border-box; }
button { font: inherit; color: inherit; padding: 0; margin: 0; border: 0; background: none; white-space: nowrap; }
h1, h2, ul, ol, p { margin: 0; padding: 0; font: inherit; list-style: none; }
svg { display: block; flex: none; }
i { flex: none; font-style: normal; }
.i12 { width: 12px; height: 12px; }
.i16 { width: 16px; height: 16px; }
.i18 { width: 18px; height: 18px; }
.i20 { width: 20px; height: 20px; }

.window { flex: 1; min-height: 0; display: flex; flex-direction: column; margin: 1px 1px 0; padding: 3px 3px 0 1px; border: 1px solid #808080; border-width: 0 1px 1px 2px; border-color: #fff #404040 #404040 #fff; }
.title { flex: none; display: flex; align-items: center; height: 18px; padding: 0 2px; margin-left: 1px; background: linear-gradient(90deg, #0a246a, #a6caf0); color: #fff; }
.title h1 { flex: 1; margin-left: 4px; font-weight: bold; }
.winbtns { display: flex; }
.winbtns button { width: 16px; height: 14px; padding: 1px; background: #d4d0c8; border: 1px solid; border-color: #fff #404040 #404040 #fff; }
.winbtns svg { width: 12px; height: 10px; }
.winbtns .close { margin-left: 2px; }
.menu { flex: none; display: flex; align-items: center; height: 20px; padding: 0 2px 0 5px; }
.menu > button { margin-left: 15px; }
.menu > svg + button { margin-left: 5px; }
.menu .winbtns { margin-left: auto; }

.toolbar { flex: none; display: flex; height: 27px; border-top: 1px solid #808080; }
.toolbar.lower { border-top-color: #fff; }
.band { display: flex; align-items: center; border-top: 1px solid #fff; border-right: 1px solid #808080; padding: 0 1px 0 4px; box-shadow: 1px 0 #fff; }
.band + .band { padding-left: 5px; }
.lower .band { padding-top: 1px; }
.lower .band + .band { padding-left: 2px; }
.grip { width: 3px; height: 19px; margin-right: 1px; background: repeating-linear-gradient(#808080 0 1px, #d4d0c8 1px 2px); }
.tsep { width: 1px; height: 21px; margin: 0 2px; background: #808080; }
.tool { display: flex; align-items: center; justify-content: center; width: 26px; height: 24px; margin: 0 1px; color: #444; border: 1px solid transparent; }
.tool.wide { width: 97px; color: #000; justify-content: flex-start; gap: 1px; padding-left: 5px; }
.tool.wide.on { width: 106px; padding-left: 3px; gap: 2px; }
.tool.drop { width: 34px; margin: 0 1px 0 0; gap: 2px; }
.tool.drop::after { content: ""; border: 3px solid transparent; border-top-color: #000; border-bottom: 0; margin-right: -2px; }
.on.tool { background: repeating-conic-gradient(#fff 0 25%, #dedbd5 0 50%) 0 0 / 2px 2px; border-color: #808080 #fff #fff #808080; }
.right { display: flex; align-items: center; gap: 14px; margin-left: auto; padding-right: 5px; }

.work { flex: 1; min-height: 0; display: flex; border-top: 1px solid #808080; }
.side { flex: none; width: 225px; display: flex; flex-direction: column; gap: 2px; padding: 0 1px 3px 0; }
.panel { display: flex; flex-direction: column; padding: 2px 2px 0 3px; border: 1px solid; border-color: #fff #808080 #808080 #fff; }
.market { flex: none; height: 309px; }
.navi { flex: 1; min-height: 0; padding-bottom: 4px; }
.ptitle { flex: none; display: flex; justify-content: space-between; align-items: center; height: 14px; background: linear-gradient(90deg, #808080, #c8c4bc); color: #d4d0c8; }
.ptitle h2 { margin-left: 2px; }
.x { width: 10px; height: 14px; font-weight: bold; font-size: 13px; line-height: 12px; color: #000; background: #d4d0c8; }
.pbody { flex: 1; min-height: 0; display: flex; border-left: 1px solid #808080; }
.pbody.white { background: #fff; border-top: 1px solid #404040; margin-top: 2px; }
.clip { position: relative; flex: 1; min-width: 0; overflow: hidden; }
.vscroll { flex: none; width: 16px; display: flex; flex-direction: column; background: repeating-conic-gradient(#fff 0 25%, #dedbd5 0 50%) 0 0 / 2px 2px; }
.arr { flex: none; display: flex; align-items: center; justify-content: center; height: 16px; }
.arr, .thumb { background: #d4d0c8; border: 1px solid; border-color: #fff #404040 #404040 #fff; box-shadow: inset -1px -1px #808080; }
.arr::before { content: ""; border: 4px solid transparent; border-top-width: 0; border-bottom-color: #000; }
.arr.dn::before { border-width: 4px 4px 0; border-top-color: #000; }
.fill { flex: 1; }
.quotes-thumb { height: 193px; }
.tree-thumb { height: 50px; }
.small { height: 8px; }
.gap { height: 5px; }
.tester .gap { height: 13px; }

table { width: 100%; border-spacing: 0; table-layout: fixed; }
th { font-weight: normal; text-align: right; background: #d4d0c8; border: 1px solid; border-color: #fff #808080 #808080 #fff; padding: 0 5px; }
th:first-child { text-align: left; }
td { text-align: right; white-space: nowrap; }
.c1 { width: 74px; }
.c2 { width: 50px; }
.quotes th { height: 18px; }
.quotes td { height: 20px; padding: 0 3px 0 0; border-right: 1px solid #d0c4c0; border-bottom: 1px solid #c8c8c0; background: #7fffd4; color: #0000d0; }
.quotes th:last-child { padding-right: 8px; }
.quotes td:last-child { padding-right: 5px; border-right: 0; }
.quotes .down td { color: #c02010; }
.quotes .hot td { background: #ffff50; }
.quotes tbody td:first-child { color: #000; }
.quotes .sym { display: flex; align-items: center; gap: 4px; padding-left: 3px; }

.tabs { flex: none; display: flex; height: 19px; border-top: 1px solid #000; }
.tab { height: 18px; padding: 0 9px; color: #444; position: relative; }
.tab:not(.on)::after { content: ""; position: absolute; right: 0; top: 4px; height: 11px; border-right: 1px solid #555; }
.tab.on { margin: -1px 0 0 2px; height: 19px; background: #fff; color: #000; border: 1px solid #000; border-top-color: #fff; }
.tester .tab:not(.on) { padding: 0 10px; }
.tester .tab.on { margin-left: 0; }
.tester .tab:first-child::after { display: none; }

.tree li { display: flex; align-items: center; height: 18px; white-space: nowrap; }
.tree span { margin-left: 5px; }

.chart { flex: 1; min-width: 0; display: flex; flex-direction: column; border-left: 1px solid #404040; }
.canvas { flex: 1; min-height: 0; display: flex; flex-direction: column; padding: 3px 0 0 3px; background: #000; color: #fff; font-size: 9px; }
.plotrow { flex: 1; min-height: 0; display: flex; }
.plot { position: relative; flex: 1; min-width: 0; border: 1px solid #fff; }
.draw { width: 100%; height: 100%; margin-top: -1px; }
.quote { position: absolute; left: 4px; top: 1px; display: flex; align-items: center; }
.quote i { border: 4px solid transparent; border-top-color: #fff; border-bottom: 0; margin-right: 4px; }
.prices { flex: none; width: 44px; display: flex; flex-direction: column; justify-content: space-between; padding: 14px 0 0; margin-bottom: -2px; }
.prices li { display: flex; align-items: center; gap: 3px; height: 13px; }
.prices li::before { content: ""; width: 3px; border-top: 1px solid #fff; }
.times { flex: none; display: flex; height: 21px; overflow: hidden; }
.times li { flex: none; width: 64px; white-space: nowrap; line-height: 18px; position: relative; }
.times li::before { content: ""; position: absolute; left: 1px; top: 0; height: 3px; border-left: 1px solid #fff; }
.ctabs { flex: none; display: flex; height: 25px; padding-left: 4px; border-top: 1px solid #000; border-bottom: 2px solid #fff; box-shadow: inset 0 1px #fff; }
.ctab { height: 20px; padding: 0 11px; color: #444; position: relative; }
.ctab:not(.on)::after { content: ""; position: absolute; right: 0; top: 4px; height: 12px; border-right: 1px solid #555; }
.ctab.on { background: #fff; color: #000; border: 1px solid #000; border-top: 0; }
.spin { display: flex; align-items: center; gap: 14px; margin-left: auto; padding-right: 6px; }
.spin button { border: 4px solid transparent; }
.spin .l { border-right-color: #999; border-left: 0; }
.spin .r { border-left-color: #999; border-right: 0; }

.tester { flex: none; display: flex; height: 287px; padding: 2px 3px 4px 2px; border-bottom: 1px solid #fff; }
.tside { flex: none; width: 13px; display: flex; flex-direction: column; margin-right: 2px; background: linear-gradient(#b8b5ae, #787878); }
.tside .x { width: 13px; flex: none; }
.tside h2 { margin-top: auto; writing-mode: vertical-rl; transform: rotate(180deg); color: #d4d0c8; }
.tmain { flex: 1; min-width: 0; display: flex; flex-direction: column; }
.tbody { flex: 1; min-height: 0; display: flex; border-top: 1px solid #404040; }
.results th { height: 17px; border-color: #fff #404040 #404040 #fff; }
.results td { height: 20px; padding: 0 3px 0 0; background: #fff; border-right: 1px solid #c0c0c0; border-bottom: 1px solid #c0c0c0; }
.results tr:nth-child(even) td { background: #ebebeb; }
.results .sym { display: flex; align-items: center; gap: 4px; padding-left: 2px; }
.mark { position: absolute; left: 193px; right: 195px; top: 88px; height: 99px; border-top: 2px solid #000; border-bottom: 3px solid #000; background: repeating-linear-gradient(90deg, #000 0 1px, #fff 1px 2px) left / 5px 100% no-repeat, repeating-linear-gradient(90deg, #000 0 1px, #fff 1px 2px) right / 5px 100% no-repeat; }

.status { flex: none; display: flex; align-items: center; height: 27px; padding-left: 3px; border-top: 1px solid #808080; position: relative; }
.hint { flex: 1; }
.cell { flex: none; display: flex; align-items: center; gap: 3px; height: 19px; padding-left: 4px; border-left: 1px solid #808080; box-shadow: inset 1px 0 #fff; }
.prof { width: 110px; }
.bar { width: 100px; }
.s { width: 70px; }
.conn { width: 138px; }
.size { position: absolute; right: 0; bottom: 0; }

.taskbar { flex: none; display: flex; align-items: center; height: 30px; padding: 0 3px 0 2px; border-top: 1px solid #fff; }
.start, .task { display: flex; align-items: center; height: 22px; border: 1px solid; border-color: #fff #404040 #404040 #fff; box-shadow: inset -1px -1px #808080; }
.start { width: 51px; gap: 2px; padding-left: 2px; font-weight: bold; }
.quick { display: flex; gap: 7px; margin-left: 8px; }
.tasks { flex: 1; display: flex; gap: 3px; margin-left: 79px; }
.task { width: 160px; gap: 4px; padding-left: 3px; overflow: hidden; }
.task.on { font-weight: bold; background: repeating-conic-gradient(#fff 0 25%, #dedbd5 0 50%) 0 0 / 2px 2px; border-color: #404040 #fff #fff #404040; box-shadow: none; }
.lang { display: flex; align-items: center; justify-content: center; width: 16px; height: 16px; background: #0a246a; color: #fff; }
.tray { display: flex; align-items: center; gap: 3px; width: 112px; height: 23px; margin-left: 11px; padding: 0 11px 0 4px; border: 1px solid; border-color: #808080 #fff #fff #808080; box-shadow: -5px 0 #d4d0c8, -6px 0 #808080; }
.more { margin-right: 2px; font-weight: bold; }
.tray time { margin-left: auto; }
</style>
